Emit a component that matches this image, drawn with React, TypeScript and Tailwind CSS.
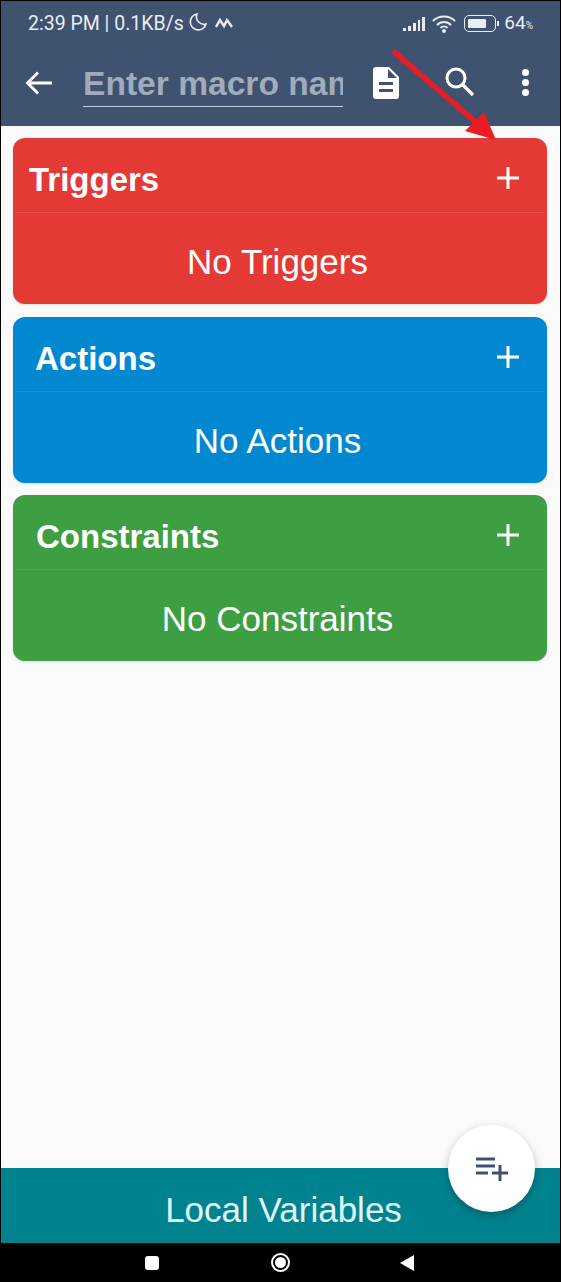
const sections = [
  { title: "Triggers", empty: "No Triggers", bg: "bg-[#e53935]", line: "bg-[#ec4f4b]", pad: "pl-4", gap: "mt-0" },
  { title: "Actions", empty: "No Actions", bg: "bg-[#0288d1]", line: "bg-[#1a90d4]", pad: "pl-[22px]", gap: "mt-[13px]" },
  { title: "Constraints", empty: "No Constraints", bg: "bg-[#3d9f42]", line: "bg-[#4aa84e]", pad: "pl-[23px]", gap: "mt-[12px]" },
];

function Plus() {
  return (
    <svg width="24" height="24" viewBox="0 0 24 24" className="mt-[6px] text-white">
      <path d="M12 1V23M1 12H23" stroke="currentColor" strokeWidth="3" fill="none" />
    </svg>
  );
}

function StatusBar() {
  return (
    <div className="flex h-[43px] items-center justify-between pl-[27px] pr-[27px] pt-[2px] text-[#e8edf3]">
      <div className="flex items-center text-[19.500px] font-['Roboto',sans-serif]">
        <span>2:39 PM | 0.1KB/s</span>
        <svg width="20" height="20" viewBox="0 0 20 20" className="ml-[4px] mb-[3px]">
          <path d="M9 2a8 8 0 1 0 9 10A7.500 7.500 0 0 1 9 2z" fill="none" stroke="currentColor" strokeWidth="1.600" />
        </svg>
        <svg width="18" height="12" viewBox="0 0 18 12" className="ml-[7px] mb-[2px]">
          <path d="M1 10 5 3l4 6 3-6 5 7" fill="none" stroke="currentColor" strokeWidth="2.400" />
        </svg>
      </div>
      <div className="flex items-center">
        <svg width="24" height="16" viewBox="0 0 24 16">
          <g fill="currentColor">
            <rect x="1" y="12" width="3" height="3" />
            <rect x="6" y="10" width="3" height="5" />
            <rect x="11" y="7" width="3" height="8" />
            <rect x="16" y="4" width="2" height="11" />
            <rect x="20" y="1" width="3" height="14" />
          </g>
        </svg>
        <svg width="24" height="20" viewBox="0 0 24 20" className="ml-[6px]">
          <g fill="none" stroke="currentColor" strokeWidth="2">
            <path d="M1 7c6-6 16-6 22 0" />
            <path d="M5 11c4-4 10-4 14 0" />
            <path d="M8.500 14c2-2 5-2 7 0" />
          </g>
          <circle cx="12" cy="17" r="2" fill="currentColor" />
        </svg>
        <div className="ml-[8px] flex h-[17px] w-[32px] items-center rounded-[5px] border-[1.500px] border-[#e8edf3] pl-[3px]">
          <div className="h-[9px] w-[18px] rounded-[1px] bg-[#e8edf3]" />
        </div>
        <div className="ml-[1px] h-[5px] w-[2px] bg-[#e8edf3]" />
        <span className="ml-[5px] text-[19px] font-['Roboto',sans-serif]">64</span>
        <span className="text-[10px] mt-[4px] font-['Roboto',sans-serif]">%</span>
      </div>
    </div>
  );
}

function Toolbar() {
  return (
    <div className="flex h-[82px] items-start text-white">
      <svg width="28" height="26" viewBox="0 0 28 26" className="ml-[24px] mt-[26px] shrink-0">
        <path d="M27 13H3M13 2.500 2.500 13 13 23.500" fill="none" stroke="currentColor" strokeWidth="2.800" />
      </svg>
      <div className="ml-[30px] mt-[20px] h-[43px] w-[260px] shrink-0 overflow-hidden border-b border-[#c3ccd9] text-[33.600px] leading-[40px] font-bold whitespace-nowrap text-[#a0abbc]">
        Enter macro name
      </div>
      <svg width="26" height="32" viewBox="0 0 26 32" className="ml-[30px] mt-[23px] shrink-0">
        <path
          fillRule="evenodd"
          fill="currentColor"
          d="M3 0H16L26 10V29a3 3 0 0 1-3 3H3a3 3 0 0 1-3-3V3a3 3 0 0 1 3-3zM6 15v3H20v-3zM6 22v3H20v-3zM15 2V11H24z"
        />
      </svg>
      <svg width="30" height="30" viewBox="0 0 30 30" className="ml-[46px] mt-[23px] shrink-0">
        <circle cx="11" cy="11" r="9" fill="none" stroke="currentColor" strokeWidth="3" />
        <path d="M17.500 17.500 28 28" stroke="currentColor" strokeWidth="3.200" fill="none" />
      </svg>
      <div className="ml-[47px] mt-[25px] flex shrink-0 flex-col gap-[3px]">
        <div className="h-[7px] w-[7px] rounded-full bg-white" />
        <div className="h-[7px] w-[7px] rounded-full bg-white" />
        <div className="h-[7px] w-[7px] rounded-full bg-white" />
      </div>
    </div>
  );
}

export default function App() {
  return (
    <div className="relative flex h-[1282px] w-[561px] flex-col overflow-hidden bg-black pt-[1px] font-['Liberation_Sans',Arial,sans-serif]">
      <div className="mx-[1px] flex flex-1 flex-col">
        <div className="h-[125px] shrink-0 bg-[#3f5270]">
          <StatusBar />
          <Toolbar />
        </div>

        <div className="flex flex-1 flex-col bg-[#fafafa] pl-[12px] pr-[13px] pt-[12px]">
          {sections.map((s) => (
            <div key={s.title} className={`h-[166px] rounded-[12px] text-white shadow-sm ${s.bg} ${s.gap}`}>
              <div className={`flex h-[74px] items-center justify-between pr-[27px] ${s.pad}`}>
                <span className="pt-[9px] text-[33px] font-bold">{s.title}</span>
                <Plus />
              </div>
              <div className={`mx-[3px] h-px ${s.line}`} />
              <div className="flex h-[91px] items-center justify-center pr-[5px] pt-[8px] text-[35px]">{s.empty}</div>
            </div>
          ))}
        </div>

        <div className="flex h-[75px] shrink-0 items-center justify-center bg-[#00838f] pl-[6px] pt-[9px] text-[35px] text-[#e0f7fa]">
          Local Variables
        </div>
      </div>

      <div className="flex h-[39px] shrink-0 items-center bg-black text-white">
        <div className="ml-[145px] h-[14px] w-[14px] rounded-[3px] bg-white" />
        <div className="ml-[112px] flex h-[19px] w-[19px] items-center justify-center rounded-full border-2 border-white">
          <div className="h-[11px] w-[11px] rounded-full bg-white" />
        </div>
        <svg width="14" height="16" viewBox="0 0 14 16" className="ml-[110px]">
          <path d="M14 0V16L0 8z" fill="currentColor" />
        </svg>
      </div>

      <div className="absolute left-[448px] top-[1125px] flex h-[87px] w-[87px] items-center justify-center rounded-full bg-white shadow-[0_4px_10px_rgba(0,0,0,0.25)]">
        <svg width="32" height="24" viewBox="0 0 32 24" className="text-[#3f5270]">
          <path d="M0 2H19M0 9H19M0 16H12M16 16H32M24 8V24" stroke="currentColor" strokeWidth="3" fill="none" />
        </svg>
      </div>

      <svg width="561" height="150" viewBox="0 0 561 150" className="absolute left-0 top-0">
        <path d="M393 51 478 124" stroke="#ed1c24" strokeWidth="5.500" fill="none" />
        <path d="M496 140 465 131 484 112z" fill="#ed1c24" />
      </svg>
    </div>
  );
}
